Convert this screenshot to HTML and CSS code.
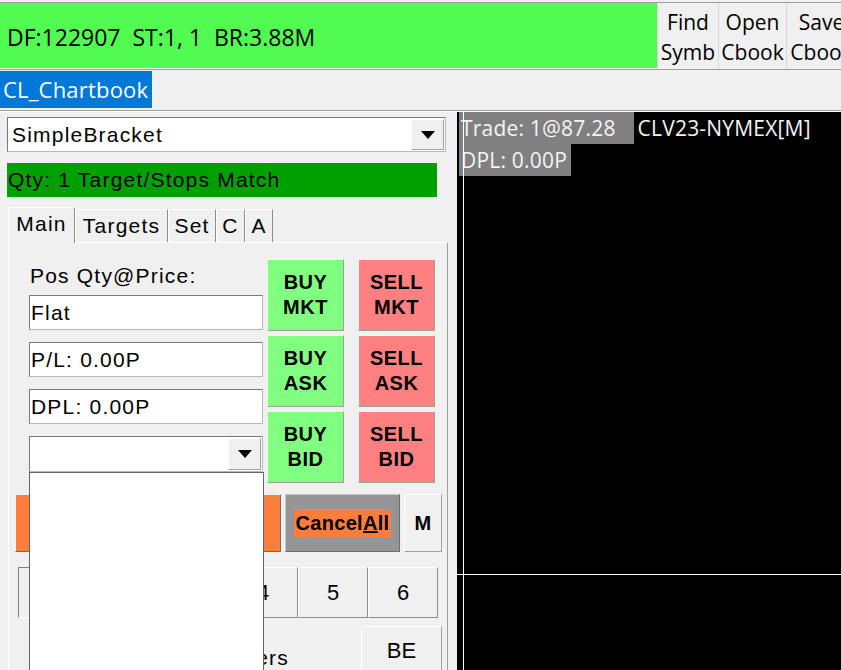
FILE: index.html
```html
<!DOCTYPE html>
<html lang="en">
<head>
  <meta charset="UTF-8" />
  <title>Trade Window</title>
  <link rel="stylesheet" href="styles.css">
</head>
<body>
  <div class="top">
    <div class="status">DF:122907  ST:1, 1  BR:3.88M</div>
    <button class="tbtn find">Find<br>Symb</button>
    <button class="tbtn open">Open<br>Cbook</button>
    <button class="tbtn save">Save<br>Cbook</button>
  </div>

  <div class="books"><span class="book sel">CL_Chartbook</span></div>

  <div class="main">
    <div class="left">
      <div class="combo strat"><span class="val">SimpleBracket</span><i class="drop"></i></div>
      <div class="qty">Qty: 1 Target/Stops Match</div>

      <div class="tabs">
        <span class="tab sel t-main">Main</span>
        <span class="tab t-targets">Targets</span>
        <span class="tab t-set">Set</span>
        <span class="tab t-c">C</span>
        <span class="tab t-a">A</span>
      </div>

      <div class="panel">
        <div class="trade">
          <div class="fields">
            <div class="lbl">Pos Qty@Price:</div>
            <div class="box">Flat</div>
            <div class="box">P/L: 0.00P</div>
            <div class="box">DPL: 0.00P</div>
            <div class="combo small"><span class="val"></span><i class="drop"></i></div>
          </div>
          <div class="btns">
            <button class="ord buy">BUY<br>MKT</button>
            <button class="ord sell">SELL<br>MKT</button>
            <button class="ord buy">BUY<br>ASK</button>
            <button class="ord sell">SELL<br>ASK</button>
            <button class="ord buy">BUY<br>BID</button>
            <button class="ord sell">SELL<br>BID</button>
          </div>
        </div>

        <div class="actions">
          <button class="act flat">FLATTEN</button>
          <button class="act cancel"><span>Cancel<u>A</u>ll</span></button>
          <button class="act m">M</button>
        </div>

        <div class="qtys">
          <button class="q down">1</button>
          <button class="q">2</button>
          <button class="q">3</button>
          <button class="q">4</button>
          <button class="q">5</button>
          <button class="q">6</button>
        </div>

        <div class="bottom">
          <span class="ers">Show Orders</span>
          <button class="be">BE</button>
        </div>
      </div>

      <!-- open list of the small combo -->
      <div class="list"></div>
    </div>

    <div class="chart">
      <div class="info">
        <div class="row"><span class="hl trd">Trade: 1@87.28</span><span class="sym">CLV23-NYMEX[M]</span></div>
        <div class="row"><span class="hl dpl">DPL: 0.00P</span></div>
      </div>
      <svg class="cross" width="384" height="558">
        <line x1="6.5" y1="0" x2="6.5" y2="558" stroke="#fff" stroke-width="1" />
        <line x1="0" y1="462.5" x2="384" y2="462.5" stroke="#fff" stroke-width="1" />
      </svg>
    </div>
  </div>
</body>
</html>
```

FILE: styles.css
```css
* { box-sizing: border-box; }
body { margin: 0; width: 841px; height: 670px; overflow: hidden; background: #f0f0f0; color: #000; font-family: "Liberation Sans", Arial, sans-serif; font-size: 21px; letter-spacing: 1.2px; }
button { font: inherit; letter-spacing: inherit; color: #000; margin: 0; padding: 0; cursor: default; }

/* top status bar */
.top { display: flex; height: 68px; margin-top: 2px; border-top: 1px solid #a0a0a0; border-bottom: 1px solid #a0a0a0; overflow: hidden; }
.status { flex: 0 0 657px; display: flex; align-items: center; padding: 3px 0 0 7px; background: #52fb52; border-bottom: 1px solid #fff; font-family: "Open Sans", sans-serif; font-size: 23px; letter-spacing: 0; white-space: pre; }
.tbtn { flex: 0 0 auto; padding-top: 2px; border: none; border-left: 1px solid #d6d6d6; background: #f0f0f0; font-family: "Open Sans", sans-serif; font-size: 21px; letter-spacing: 0; line-height: 30px; }
.find { width: 61px; }
.open { width: 68px; }
.save { width: 70px; }

/* chartbook tabs */
.books { height: 41px; border-bottom: 1px solid #a0a0a0; }
.book { display: inline-block; height: 37px; margin-top: 1px; padding: 0 4px 0 3px; line-height: 37px; font-family: "Open Sans", sans-serif; font-size: 22px; letter-spacing: 0.2px; }
.book.sel { background: #0078d7; color: #fff; }

.main { display: flex; height: 559px; border-top: 1px solid #fff; }
.left { flex: 0 0 457px; position: relative; padding: 5px 0 0 7px; }

.combo { display: flex; align-items: center; justify-content: space-between; background: #fff; border: 1px solid #7a7a7a; border-right-color: #b8b8b8; border-bottom-color: #b8b8b8; }
.combo .val { padding-left: 4px; }
.strat { width: 439px; height: 35px; }
.drop { display: flex; align-items: center; justify-content: center; width: 33px; height: 31px; margin-right: 1px; background: #f0f0f0; border: 1px solid #fff; border-right-color: #a0a0a0; border-bottom-color: #a0a0a0; }
.drop::after { content: ""; border-left: 7px solid transparent; border-right: 7px solid transparent; border-top: 8px solid #000; }

.qty { width: 430px; height: 34px; margin-top: 11px; padding-left: 1px; background: #00a000; line-height: 34px; }

.tabs { display: flex; align-items: flex-end; height: 35px; margin: 10px 0 0 1px; }
.tab { height: 33px; padding-bottom: 1px; text-align: center; line-height: 32px; background: #f0f0f0; border-top: 1px solid #fff; border-left: 1px solid #fff; border-right: 1px solid #8c8c8c; }
.tab.sel { height: 36px; margin-bottom: -1px; padding-bottom: 4px; position: relative; z-index: 1; }
.t-main { width: 67px; }
.t-targets { width: 93px; }
.t-set { width: 48px; }
.t-c { width: 29px; }
.t-a { width: 28px; }

.panel { width: 440px; height: 440px; margin-left: 1px; border-top: 1px solid #fff; border-left: 1px solid #fff; border-right: 1px solid #a0a0a0; }

.trade { display: flex; padding-top: 16px; }
.fields { width: 234px; margin-left: 20px; }
.lbl { height: 36px; padding: 5px 0 0 1px; line-height: 24px; }
.box { height: 35px; margin-bottom: 12px; padding-left: 1px; background: #fff; border: 1px solid #7a7a7a; border-right-color: #b8b8b8; border-bottom-color: #b8b8b8; line-height: 33px; }
.small { width: 234px; height: 36px; }
.small .drop { height: 32px; }

.btns { display: grid; grid-template-columns: 77px 77px; grid-auto-rows: 72px; gap: 4px 14px; margin-left: 4px; }
.ord { font-weight: bold; font-size: 20px; letter-spacing: 0.5px; line-height: 25px; border: 1px solid; border-color: #f4f4f4 #a0a0a0 #a0a0a0 #f4f4f4; }
.buy { background: #80ff80; }
.sell { background: #ff8080; }

.actions { display: flex; gap: 4px; height: 58px; margin: 11px 0 0 6px; }
.act { font-weight: bold; font-size: 20px; letter-spacing: 0.3px; border: 1px solid; border-color: #f4f4f4 #6e6e6e #6e6e6e #f4f4f4; }
.flat { width: 266px; background: #fd7d3d; }
.cancel { width: 115px; background: #959595; border-color: #c8c8c8 #6e6e6e #6e6e6e #c8c8c8; }
.cancel span { padding: 3px 2px; background: #fd7d3d; }
.m { width: 38px; background: #f0f0f0; border-color: #fff #a0a0a0 #a0a0a0 #fff; }

.qtys { display: flex; margin: 15px 0 0 9px; }
.q { width: 70px; height: 51px; font-size: 22px; letter-spacing: 0; background: #f0f0f0; border: 1px solid; border-color: #fff #8c8c8c #8c8c8c #fff; }
.q.down { border-color: #808080 #fff #fff #808080; }

.bottom { display: flex; justify-content: flex-end; margin-top: 8px; padding-right: 5px; }
.ers { margin: 20px 72px 0 0; line-height: 24px; white-space: nowrap; }
.be { width: 81px; height: 50px; font-size: 22px; letter-spacing: 0; background: #f0f0f0; border: 1px solid; border-color: #fff #a0a0a0 #a0a0a0 #fff; }

.list { position: absolute; left: 29px; top: 360px; width: 235px; height: 220px; z-index: 2; background: #fff; border: 1px solid #646464; }

/* chart */
.chart { flex: 1; position: relative; background: #000; }
.info { margin-left: 2px; font-family: "Open Sans", sans-serif; font-size: 21px; letter-spacing: 0.2px; line-height: 32px; color: #f4f4f4; }
.row { display: flex; }
.hl { padding-left: 2px; background: #808080; }
.trd { padding-right: 18px; }
.dpl { padding-right: 4px; }
.sym { padding-left: 4px; }
.cross { position: absolute; left: 0; top: 0; }
```
